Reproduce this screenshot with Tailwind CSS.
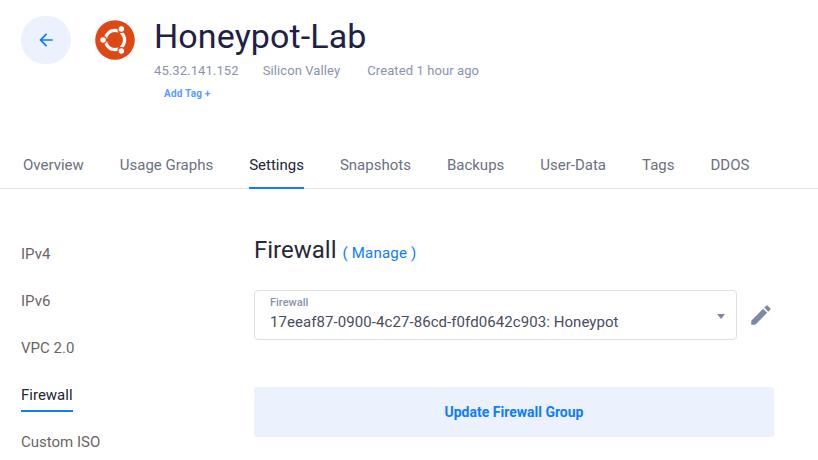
<!DOCTYPE html>
<html>
<head>
<meta charset="utf-8">
<script src="https://cdn.jsdelivr.net/npm/@tailwindcss/browser@4"></script>
</head>
<body class="bg-white overflow-hidden font-['Roboto',sans-serif] w-[818px] h-[460px]">
<header class="flex h-[139px] pl-[21px] pt-[16px]">
  <button class="w-[50px] h-[48px] rounded-full bg-[#ebf2fe] flex items-center justify-center">
    <svg width="20" height="20" viewBox="0 0 24 24" fill="#0f7bff"><path d="M20 11H7.83l5.59-5.59L12 4l-8 8 8 8 1.41-1.41L7.83 13H20v-2z"/></svg>
  </button>
  <div class="ml-[24px] mt-[4px]">
    <svg width="40" height="40" viewBox="0 0 40 40">
      <circle cx="20" cy="20" r="19.8" fill="#dd4814"/>
      <circle cx="20" cy="20" r="9.6" fill="none" stroke="#fff" stroke-width="3.2"/>
      <path d="M20 20L6 12L12 2H28L34 12Z" fill="none"/>
      <g stroke="#dd4814" stroke-width="2.2"><line x1="20" y1="20" x2="7" y2="20"/><line x1="20" y1="20" x2="27" y2="8"/><line x1="20" y1="20" x2="27" y2="32"/></g>
      <g fill="#fff" stroke="#dd4814" stroke-width="1.2"><circle cx="8" cy="20" r="3.4"/><circle cx="26.4" cy="9" r="3.4"/><circle cx="26.4" cy="31" r="3.4"/></g>
    </svg>
  </div>
  <div class="ml-[19px]">
    <h1 class="text-[34px] leading-[40px] text-[#1e2144] tracking-[0.1px]">Honeypot-Lab</h1>
    <div class="flex mt-[7px] text-[13px] leading-[16px] text-[#8a93ab] tracking-[0.1px]">
      <span>45.32.141.152</span><span class="ml-[24px]">Silicon Valley</span><span class="ml-[27px]">Created 1 hour ago</span>
    </div>
    <div class="ml-[10px] mt-[9px] text-[10px] leading-[12px] font-bold text-[#5a9bff] tracking-[0.2px]">Add Tag +</div>
  </div>
</header>
<nav class="flex h-[50px] border-b border-[#e3e5ea] pl-[23px] gap-[36px] text-[15px] text-[#6b7080] leading-[52px]">
  <a>Overview</a><a>Usage Graphs</a>
  <a class="text-[#22253a] border-b-2 border-[#0f7bff] h-[50px]">Settings</a>
  <a>Snapshots</a><a>Backups</a><a>User-Data</a><a>Tags</a><a>DDOS</a>
</nav>
<main class="flex pl-[21px] pt-[41px]">
  <aside class="w-[233px] flex flex-col text-[15px] leading-[20px] text-[#6b6466] gap-[27px] pt-[14px]">
    <a class="w-fit">IPv4</a><a class="w-fit">IPv6</a><a class="w-fit">VPC 2.0</a>
    <a class="w-fit text-[#22253a] relative after:absolute after:left-0 after:right-0 after:top-[25px] after:h-[2px] after:bg-[#0f7bff]">Firewall</a>
    <a class="w-fit">Custom ISO</a>
  </aside>
  <section class="w-[520px]">
    <div class="flex items-baseline h-[40px]">
      <h2 class="text-[24px] leading-[40px] text-[#26283a]">Firewall</h2>
      <a class="ml-[6px] text-[15px] text-[#0f7bff] tracking-[0.2px]">( Manage )</a>
    </div>
    <div class="flex items-center mt-[20px]">
      <div class="relative w-[487px] h-[50px] border border-[#dfe0e3] rounded-[4px] pl-[15px] pt-[5px]">
        <div class="text-[11px] leading-[14px] font-medium text-[#8a93ab]">Firewall</div>
        <div class="text-[15px] leading-[20px] text-[#4a4c5e] mt-[2px] tracking-[0.07px]">17eeaf87-0900-4c27-86cd-f0fd0642c903: Honeypot</div>
        <div class="absolute right-[11px] top-[23px] w-0 h-0 border-x-[4px] border-x-transparent border-t-[5px] border-t-[#7f88a6]"></div>
      </div>
      <svg class="ml-[11px]" width="26" height="26" viewBox="0 0 24 24" fill="#7f88a6"><path d="M3 17.25V21h3.75L17.81 9.94l-3.75-3.75L3 17.25zM20.71 7.04a1 1 0 0 0 0-1.41l-2.34-2.34a1 1 0 0 0-1.41 0l-1.83 1.83 3.75 3.75 1.83-1.83z"/></svg>
    </div>
    <button class="mt-[47px] w-[520px] h-[50px] bg-[#ebf2fe] rounded-[3px] text-[14px] font-bold text-[#0f7bff]">Update Firewall Group</button>
  </section>
</main>
</body>
</html>
